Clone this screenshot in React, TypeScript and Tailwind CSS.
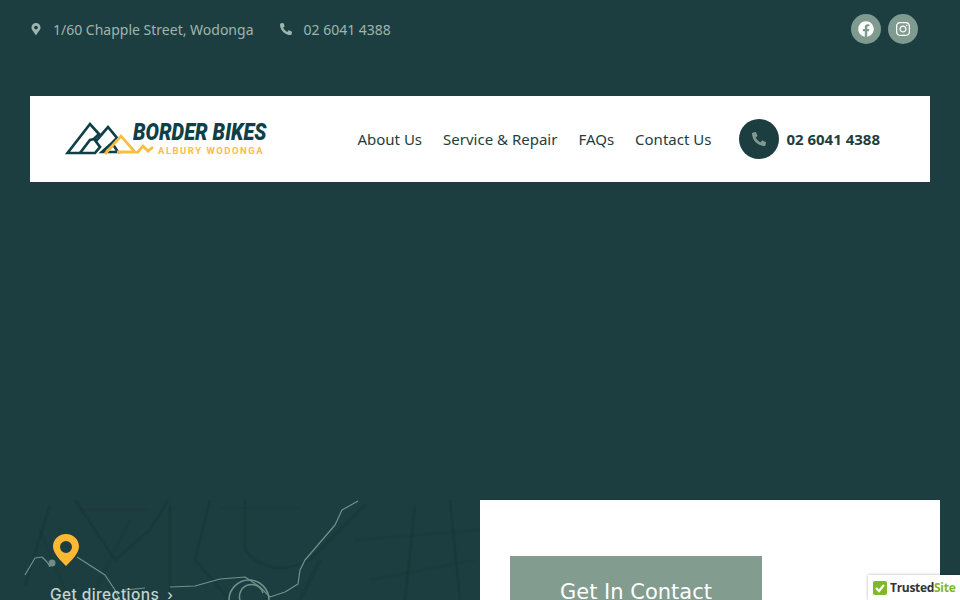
import { FaFacebook, FaInstagram, FaMapMarkerAlt, FaPhoneAlt } from "react-icons/fa";

const NAV = ["About Us", "Service & Repair", "FAQs", "Contact Us"];

function Logo() {
  return (
    <div className="relative h-[36px] w-[202px] shrink-0">
      <svg width="92" height="36" viewBox="0 0 92 36" className="absolute left-0 top-0" fill="none">
        <g stroke="#0f3f47" strokeWidth="2.7" strokeLinejoin="miter">
          <path d="M2.5 32 L25 3 L34 13 L29 18 L35 26 L30 32 Z" />
          <path d="M15 32 L25 19 L29 18" />
          <path d="M31 20 L43 6 L52 17 L47 22 L53 31 H37 L47 22" />
        </g>
        <path
          d="M40 33 L56 15 L70 31 H52 M72 32 L78 25 L83 30 L88 26"
          stroke="#f8bd45"
          strokeWidth="2.8"
        />
      </svg>
      <span className="absolute left-[68px] top-[2px] origin-left scale-x-[0.87] whitespace-nowrap font-['Roboto',sans-serif] text-[23px] font-black italic leading-[20px] text-[#0f3f47]">
        BORDER BIKES
      </span>
      <span className="absolute left-[93px] top-[25px] whitespace-nowrap font-['Roboto',sans-serif] text-[9.5px] font-bold leading-[10px] tracking-[1.5px] text-[#f8bd45]">
        ALBURY WODONGA
      </span>
    </div>
  );
}

function MapLines() {
  return (
    <svg viewBox="0 0 460 100" className="h-full w-full" fill="none">
      <g stroke="#16302f" strokeOpacity="0.32" strokeWidth="3">
        <path d="M5 85 L30 5 M55 0 L95 60 L130 30 L148 0 M150 5 V100 M190 0 L175 60 L210 100" />
        <path d="M225 0 V50 Q250 80 290 60 L345 5 M395 5 L385 100 M430 0 L440 100 M300 60 L280 100" />
        <path d="M110 20 L70 100 M335 40 L460 30 M350 80 L455 60 M60 10 H130 M200 8 H280 M20 30 L45 90" strokeOpacity="0.2" />
      </g>
      <g stroke="#6f928c" strokeWidth="1.2" strokeLinejoin="round">
        <path d="M5 75 L15 58 L22 57 L27 62 L30 67" />
        <path d="M57 57 L85 75 L95 90 L100 100" />
        <path d="M105 90 L125 88 M150 87 L175 86 L200 79 L225 77 L240 87 L250 97 L265 92 L278 84 L280 70 L285 60 L315 25 L322 10 L338 1" />
        <circle cx="229" cy="100" r="20" strokeWidth="1.5" />
        <path d="M243 93 A11 11 0 0 0 220 100" strokeWidth="1.5" />
      </g>
      <circle cx="32" cy="63" r="3.5" fill="#6f8d88" />
    </svg>
  );
}

export default function App() {
  return (
    <div className="relative h-[600px] w-full overflow-hidden bg-[#1d3e41] font-['Noto_Sans',sans-serif]">
      {/* top bar */}
      <div className="flex h-[96px] items-start justify-between pl-[30px] pr-[42px] pt-[14px] text-[14px] text-[#9db5ae]">
        <div className="flex h-[30px] items-center">
          <FaMapMarkerAlt className="mr-[11px] h-[12px] w-[12px]" />
          <span>1/60 Chapple Street, Wodonga</span>
          <FaPhoneAlt className="ml-[27px] mr-[11px] h-[12px] w-[12px]" />
          <span>02 6041 4388</span>
        </div>
        <div className="flex gap-[7px]">
          <div className="flex h-[30px] w-[30px] items-center justify-center rounded-full bg-[#7f9a8f] text-white">
            <FaFacebook className="h-[16px] w-[16px]" />
          </div>
          <div className="flex h-[30px] w-[30px] items-center justify-center rounded-full bg-[#7f9a8f] text-white">
            <FaInstagram className="h-[16px] w-[16px]" />
          </div>
        </div>
      </div>

      {/* header */}
      <div className="mx-[30px] flex h-[86px] items-center bg-white pl-[35px] pr-[50px]">
        <Logo />
        <nav className="ml-auto flex gap-[21px] text-[15px] text-[#1d3e41]">
          {NAV.map((item) => (
            <span key={item}>{item}</span>
          ))}
        </nav>
        <div className="ml-[28px] flex items-center gap-[7px]">
          <div className="flex h-[40px] w-[40px] items-center justify-center rounded-full bg-[#1d3e41] text-[#7f9a8f]">
            <FaPhoneAlt className="h-[14px] w-[14px]" />
          </div>
          <span className="text-[15px] font-bold text-[#1d3e41]">02 6041 4388</span>
        </div>
      </div>

      {/* bottom panels */}
      <div className="mx-[20px] mt-[318px] grid h-[100px] grid-cols-2">
        <div className="relative overflow-hidden bg-[#1d3e41]">
          <MapLines />
          <svg viewBox="0 0 26 32" className="absolute left-[33px] top-[34px] h-[32px] w-[26px]">
            <path
              fillRule="evenodd"
              fill="#fcb734"
              d="M13 0 C20.5 0 26 5.6 26 12.6 C26 19.5 18 27 13 32 C8 27 0 19.5 0 12.6 C0 5.6 5.5 0 13 0 Z M13 7 A6 6 0 1 0 13 19 A6 6 0 1 0 13 7 Z"
            />
          </svg>
          <div className="absolute left-[30px] top-[85px] flex items-center whitespace-nowrap font-['Inter',sans-serif] text-[15.5px] font-medium leading-[20px] tracking-[0.4px] text-[#c3d3ce]">
            Get directions
            <span className="ml-[8px] text-[14px]">›</span>
          </div>
        </div>
        <div className="overflow-hidden bg-white pl-[30px] pt-[56px]">
          <div className="flex h-[60px] w-[252px] justify-center bg-[#829c90] pt-[23px] font-['DejaVu_Sans',sans-serif] text-[21px] leading-[27px] text-white">
            Get In Contact
          </div>
        </div>
      </div>

      {/* trust badge */}
      <div className="absolute bottom-0 right-0 flex h-[25px] w-[92px] items-center gap-[3px] bg-white pl-[5px] shadow-[0_0_3px_rgba(0,0,0,0.3)]">
        <svg viewBox="0 0 14 14" className="h-[14px] w-[14px] shrink-0">
          <rect width="14" height="14" rx="2" fill="#7db928" />
          <path d="M3 7 L6 10 L11 4" fill="none" stroke="#fff" strokeWidth="2.2" />
        </svg>
        <span className="whitespace-nowrap font-['Open_Sans',sans-serif] text-[12px] font-bold tracking-[-0.3px] text-[#333]">
          Trusted<span className="text-[#7db928]">Site</span>
        </span>
      </div>
    </div>
  );
}
